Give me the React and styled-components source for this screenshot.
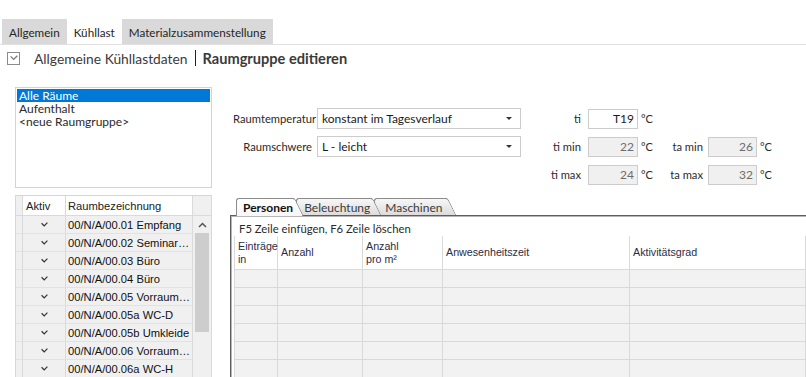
import React from "react";
import styled, { createGlobalStyle } from "styled-components";

const UI = `"Lato", "Open Sans", "DejaVu Sans", sans-serif`;
const CLASSIC = `"Liberation Sans", Arial, sans-serif`;

const GlobalStyle = createGlobalStyle`
  html, body {
    margin: 0;
    padding: 0;
    background: #fff;
  }
`;

const Page = styled.div`
  width: 806px;
  height: 377px;
  overflow: hidden;
  background: #fff;
  font-family: ${UI};
  font-size: 12px;
  color: #1e1e1e;
`;

/* ---- top tabs ---- */
const TopBar = styled.div`
  margin-top: 19px;
  height: 25px;
  padding-left: 2px;
  display: flex;
  border-bottom: 1px solid #e1e1e1;
`;

const TopTab = styled.div`
  display: flex;
  align-items: center;
  padding: 0 7px;
  font-size: 11.7px;
  color: #262626;
  background: ${(p) => (p.$active ? "#fff" : "#d9d9d9")};
`;

/* ---- title row ---- */
const TitleRow = styled.div`
  height: 26px;
  padding-left: 7px;
  display: flex;
  align-items: center;
`;

const CheckBox = styled.span`
  width: 11px;
  height: 11px;
  border: 1px solid #8a8a8a;
  display: flex;
  align-items: center;
  justify-content: center;
  margin-right: 14px;
`;

const TitleText = styled.span`
  font-size: ${(p) => (p.$bold ? 14.6 : 13.8)}px;
  color: #3a3a3a;
  font-weight: ${(p) => (p.$bold ? 700 : 400)};
`;

const Divider = styled.span`
  width: 1px;
  height: 16px;
  background: #222;
  margin: 0 7px;
`;

/* ---- body ---- */
const Body = styled.div`
  display: flex;
`;

const LeftCol = styled.div`
  width: 197px;
  margin-left: 15px;
  padding-top: 16px;
  flex-shrink: 0;
`;

const ListBox = styled.div`
  height: 101px;
  box-sizing: border-box;
  border: 1px solid #d3d3d3;
  padding: 1px 1px 0 1px;
`;

const ListItem = styled.div`
  height: 13px;
  line-height: 13px;
  padding-left: 2px;
  font-size: 12px;
  color: ${(p) => (p.$selected ? "#fff" : "#2a2a2a")};
  background: ${(p) => (p.$selected ? "#0078d7" : "transparent")};
`;

const RoomGrid = styled.div`
  margin-top: 7px;
  display: flex;
  border: 1px solid #d6d6d6;
  border-right-color: #dadada;
  font-family: ${CLASSIC};
  font-size: 11.2px;
`;

const GridBody = styled.div`
  display: grid;
  grid-template-columns: 7px 43px 127px;
  grid-auto-rows: 18px;
  grid-template-rows: 20px;
`;

const HeadCell = styled.div`
  box-sizing: border-box;
  border-right: 1px solid #dadada;
  border-bottom: 1px solid #dadada;
  background: ${(p) => (p.$muted ? "#f0f0f0" : "#fff")};
  display: flex;
  align-items: center;
  padding-left: ${(p) => p.$pad || 0}px;
  color: #222;
  white-space: nowrap;
  overflow: hidden;
`;

const Cell = styled.div`
  box-sizing: border-box;
  border-right: 1px solid #dadada;
  border-bottom: 1px solid #e2e2e2;
  background: #f0f0f0;
  display: flex;
  align-items: center;
  justify-content: ${(p) => p.$align || "flex-start"};
  padding-left: ${(p) => p.$pad || 0}px;
  overflow: hidden;
  color: #111;
`;

const RowNo = styled.span`
  color: #2f8fe0;
  margin-right: -6px;
  margin-left: auto;
`;

const Ellipsis = styled.span`
  white-space: nowrap;
  overflow: hidden;
  text-overflow: ellipsis;
`;

const ScrollCol = styled.div`
  width: 18px;
  display: flex;
  flex-direction: column;
  background: #f0f0f0;
`;

const ScrollHead = styled.div`
  height: 20px;
  border-bottom: 1px solid #dadada;
  box-sizing: border-box;
`;

const ScrollArrow = styled.div`
  height: 17px;
  display: flex;
  align-items: center;
  justify-content: center;
`;

const ScrollThumb = styled.div`
  margin: 0 2px 0 2px;
  height: 99px;
  background: #cdcdcd;
`;

const RightCol = styled.div`
  flex: 1;
  margin-left: 18px;
  padding-top: 37px;
  min-width: 0;
`;

const FormGrid = styled.div`
  display: grid;
  grid-template-columns: 87px 204px 67px 50px 30px 40px 49px auto;
  grid-template-rows: repeat(3, 21px);
  row-gap: 7px;
  align-items: center;
  font-size: 11.2px;
`;

const Label = styled.div`
  text-align: right;
  padding-right: ${(p) => p.$gap ?? 1}px;
  white-space: nowrap;
  color: #2a2a2a;
`;

const Combo = styled.div`
  height: 21px;
  box-sizing: border-box;
  border: 1px solid #cccccc;
  display: flex;
  align-items: center;
  justify-content: space-between;
  padding: 0 8px 0 4px;
  font-size: 12px;
  color: #1a1a1a;
`;

const Caret = styled.span`
  width: 0;
  height: 0;
  border-left: 3px solid transparent;
  border-right: 3px solid transparent;
  border-top: 3px solid #333;
`;

const NumBox = styled.div`
  height: 20px;
  box-sizing: border-box;
  border: 1px solid #cccccc;
  background: ${(p) => (p.$readonly ? "#f0f0f0" : "#fff")};
  color: ${(p) => (p.$readonly ? "#6d6d6d" : "#1a1a1a")};
  text-align: right;
  padding-right: 3px;
  line-height: 18px;
  font-size: 12px;
`;

const Unit = styled.div`
  padding-left: 3px;
  color: #2a2a2a;
  font-size: 11px;
`;

/* ---- inner tab control ---- */
const TabArea = styled.div`
  margin-top: 13px;
`;

const TabStrip = styled.div`
  display: flex;
  align-items: flex-end;
  height: 17px;
  padding-left: 6px;
  position: relative;
  z-index: 2;
`;

const DocTab = styled.div`
  position: relative;
  z-index: ${(p) => p.$z};
  box-sizing: border-box;
  height: ${(p) => (p.$active ? 18 : 17)}px;
  margin-bottom: ${(p) => (p.$active ? -1 : 0)}px;
  margin-right: 2px;
  padding: 0 ${(p) => p.$pr}px 0 ${(p) => p.$pl}px;
  display: flex;
  align-items: center;
  border-top: 1px solid #8c8c8c;
  border-left: 1px solid #8c8c8c;
  border-top-left-radius: 3px;
  font-size: 12px;
  font-weight: ${(p) => (p.$active ? 700 : 400)};
  color: ${(p) => (p.$active ? "#111" : "#3a3a3a")};
  background: ${(p) =>
    p.$active
      ? "linear-gradient(#ffffff, #f6f6f6)"
      : "linear-gradient(#f7f7f7, #dcdcdc)"};

  &::after {
    content: "";
    position: absolute;
    top: -1px;
    bottom: 0;
    right: -1px;
    width: 11px;
    background: inherit;
    border-top: 1px solid #8c8c8c;
    border-right: 1px solid #8c8c8c;
    border-top-right-radius: 3px;
    transform: skewX(26deg);
    transform-origin: top left;
  }
`;

const TabLabel = styled.span`
  position: relative;
  z-index: 1;
`;

const TabPanel = styled.div`
  position: relative;
  z-index: 1;
  border-top: 1px solid #5e5e5e;
  border-left: 1px solid #5e5e5e;
  box-shadow: inset 1px 1px 0 #b5b5b5;
  padding: 6px 0 0 3px;
  height: 200px;
`;

const Hint = styled.div`
  height: 14px;
  line-height: 14px;
  padding-left: 5px;
  font-size: 11.3px;
  color: #2a2a2a;
`;

const EntryTable = styled.div`
  display: grid;
  grid-template-columns: 43px 85px 80px 187px 1fr;
  grid-template-rows: 34px;
  grid-auto-rows: 18px;
  border-left: 1px solid #d9d9d9;
  font-family: ${CLASSIC};
  font-size: 10.7px;
`;

const THead = styled.div`
  box-sizing: border-box;
  border-right: 1px solid #d9d9d9;
  border-bottom: 1px solid #d9d9d9;
  background: #fff;
  display: flex;
  align-items: center;
  padding-left: 3px;
  line-height: 13px;
  color: #2c2c44;
  white-space: pre-line;
`;

const TCell = styled.div`
  box-sizing: border-box;
  border-right: 1px solid #d9d9d9;
  border-bottom: 1px solid #d9d9d9;
  background: #f2f2f2;
`;

const rooms = [
  "00/N/A/00.01 Empfang",
  "00/N/A/00.02 Seminarraum",
  "00/N/A/00.03 Büro",
  "00/N/A/00.04 Büro",
  "00/N/A/00.05 Vorraum WC",
  "00/N/A/00.05a WC-D",
  "00/N/A/00.05b Umkleide",
  "00/N/A/00.06 Vorraum WC",
  "00/N/A/00.06a WC-H",
  "00/N/A/00.07 Lager",
];

const Tick = ({ size = 7, color = "#333" }) => (
  <svg width={size} height={size * 0.72} viewBox="0 0 7 5">
    <path d="M0.6 1.2 L3.2 3.8 L6.4 0.6" fill="none" stroke={color} strokeWidth="1.2" />
  </svg>
);

const UpChevron = () => (
  <svg width="9" height="6" viewBox="0 0 9 6">
    <path d="M1 5 L4.5 1.5 L8 5" fill="none" stroke="#555" strokeWidth="1.5" />
  </svg>
);

const tableCols = ["Einträge\nin", "Anzahl", "Anzahl\npro m²", "Anwesenheitszeit", "Aktivitätsgrad"];

export default function App() {
  return (
    <Page>
      <GlobalStyle />
      <TopBar>
        <TopTab>Allgemein</TopTab>
        <TopTab $active>Kühllast</TopTab>
        <TopTab>Materialzusammenstellung</TopTab>
      </TopBar>

      <TitleRow>
        <CheckBox>
          <Tick size={8} color="#7a7a7a" />
        </CheckBox>
        <TitleText>Allgemeine Kühllastdaten</TitleText>
        <Divider />
        <TitleText $bold>Raumgruppe editieren</TitleText>
      </TitleRow>

      <Body>
        <LeftCol>
          <ListBox>
            <ListItem $selected>Alle Räume</ListItem>
            <ListItem>Aufenthalt</ListItem>
            <ListItem>&lt;neue Raumgruppe&gt;</ListItem>
          </ListBox>

          <RoomGrid>
            <GridBody>
              <HeadCell $muted />
              <HeadCell $pad={3}>Aktiv</HeadCell>
              <HeadCell $pad={2}>Raumbezeichnung</HeadCell>
              {rooms.map((r, i) => (
                <React.Fragment key={r}>
                  <Cell>
                    <RowNo>{i + 1}</RowNo>
                  </Cell>
                  <Cell $align="center">
                    <Tick />
                  </Cell>
                  <Cell $pad={2}>
                    <Ellipsis>{r}</Ellipsis>
                  </Cell>
                </React.Fragment>
              ))}
            </GridBody>
            <ScrollCol>
              <ScrollHead />
              <ScrollArrow>
                <UpChevron />
              </ScrollArrow>
              <ScrollThumb />
            </ScrollCol>
          </RoomGrid>
        </LeftCol>

        <RightCol>
          <FormGrid>
            <Label>Raumtemperatur</Label>
            <Combo>
              konstant im Tagesverlauf
              <Caret />
            </Combo>
            <Label $gap={7}>ti</Label>
            <NumBox>T19</NumBox>
            <Unit>°C</Unit>
            <span />
            <span />
            <span />

            <Label $gap={5}>Raumschwere</Label>
            <Combo>
              L - leicht
              <Caret />
            </Combo>
            <Label $gap={7}>ti min</Label>
            <NumBox $readonly>22</NumBox>
            <Unit>°C</Unit>
            <Label $gap={5}>ta min</Label>
            <NumBox $readonly>26</NumBox>
            <Unit>°C</Unit>

            <span />
            <span />
            <Label $gap={7}>ti max</Label>
            <NumBox $readonly>24</NumBox>
            <Unit>°C</Unit>
            <Label $gap={5}>ta max</Label>
            <NumBox $readonly>32</NumBox>
            <Unit>°C</Unit>
          </FormGrid>

          <TabArea>
            <TabStrip>
              <DocTab $active $z={3} $pl={6} $pr={1}>
                <TabLabel>Personen</TabLabel>
              </DocTab>
              <DocTab $z={2} $pl={7} $pr={2}>
                <TabLabel>Beleuchtung</TabLabel>
              </DocTab>
              <DocTab $z={1} $pl={10} $pr={5}>
                <TabLabel>Maschinen</TabLabel>
              </DocTab>
            </TabStrip>
            <TabPanel>
              <Hint>F5 Zeile einfügen, F6 Zeile löschen</Hint>
              <EntryTable>
                {tableCols.map((c) => (
                  <THead key={c}>{c}</THead>
                ))}
                {Array.from({ length: 35 }, (_, i) => (
                  <TCell key={i} />
                ))}
              </EntryTable>
            </TabPanel>
          </TabArea>
        </RightCol>
      </Body>
    </Page>
  );
}
